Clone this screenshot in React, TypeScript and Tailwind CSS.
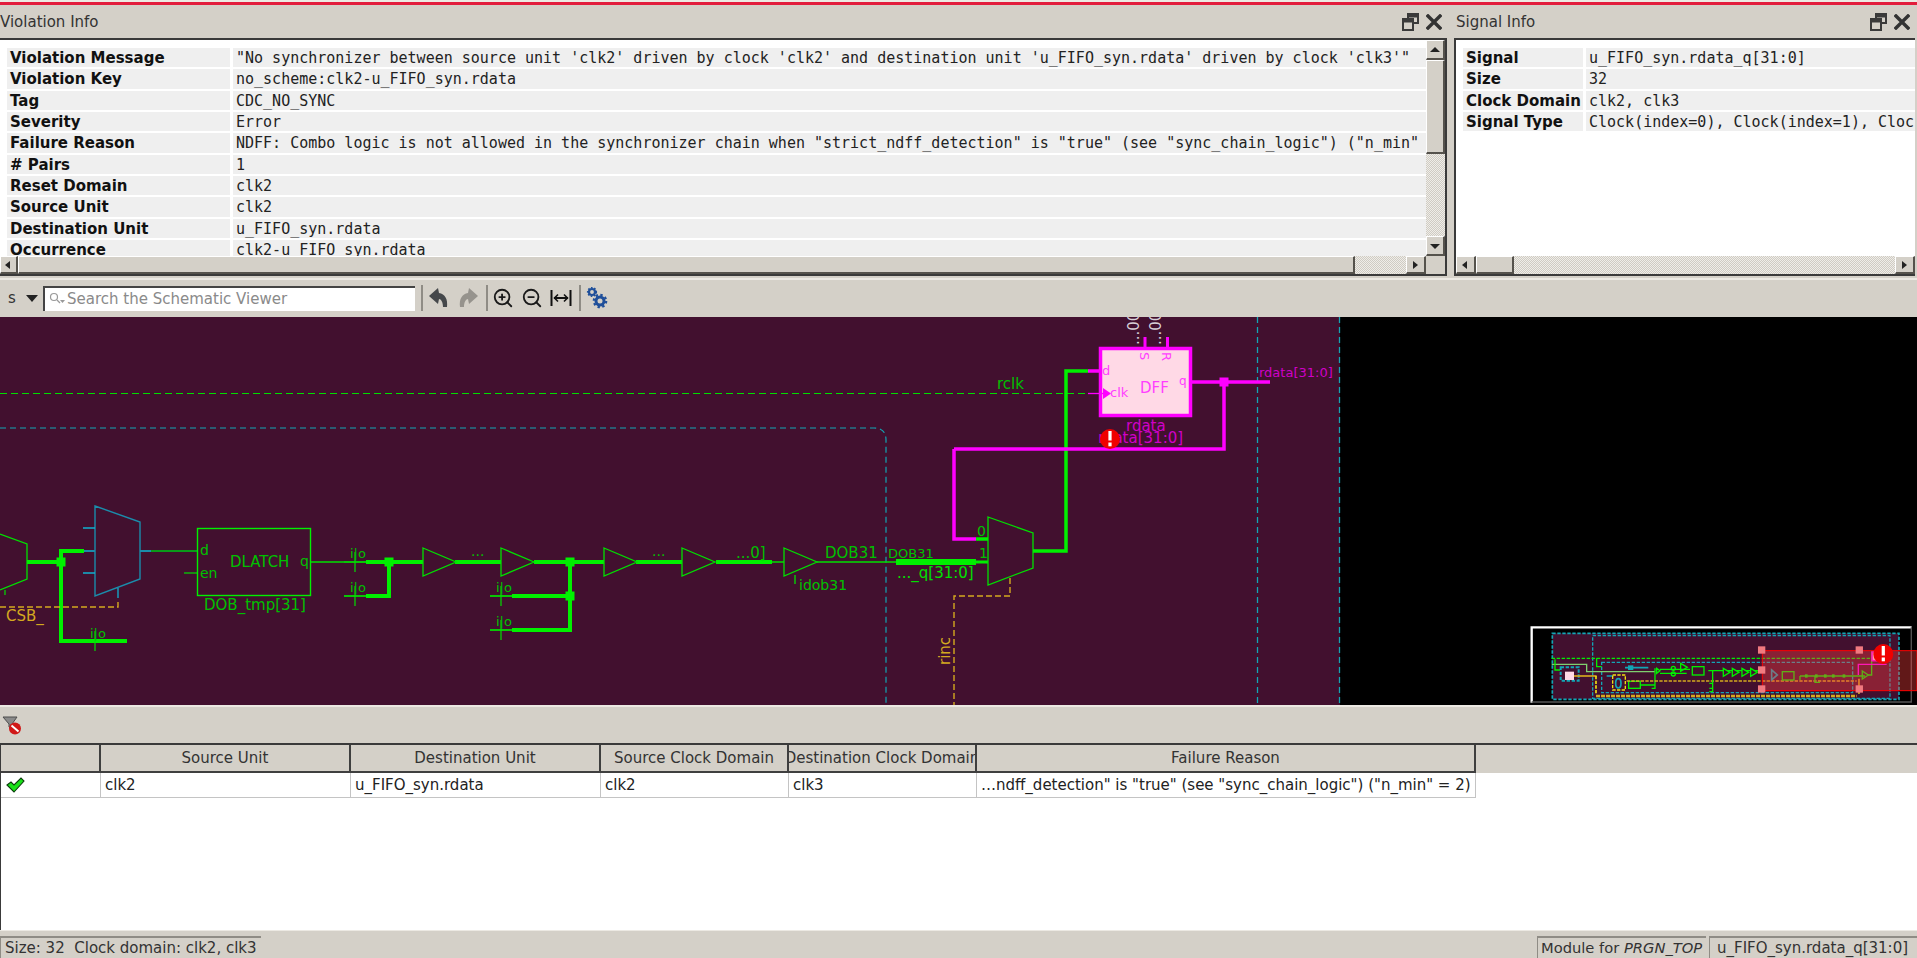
import { ZoomIn, ZoomOut } from "lucide-react";

const violationRows = [
  ["Violation Message", `"No synchronizer between source unit 'clk2' driven by clock 'clk2' and destination unit 'u_FIFO_syn.rdata' driven by clock 'clk3'"`],
  ["Violation Key", "no_scheme:clk2-u_FIFO_syn.rdata"],
  ["Tag", "CDC_NO_SYNC"],
  ["Severity", "Error"],
  ["Failure Reason", `NDFF: Combo logic is not allowed in the synchronizer chain when "strict_ndff_detection" is "true" (see "sync_chain_logic") ("n_min"`],
  ["# Pairs", "1"],
  ["Reset Domain", "clk2"],
  ["Source Unit", "clk2"],
  ["Destination Unit", "u_FIFO_syn.rdata"],
  ["Occurrence", "clk2-u_FIFO_syn.rdata"],
];

const signalRows = [
  ["Signal", "u_FIFO_syn.rdata_q[31:0]"],
  ["Size", "32"],
  ["Clock Domain", "clk2, clk3"],
  ["Signal Type", "Clock(index=0), Clock(index=1), Clock(index=2), Clock(index=3)"],
];

const tableHeaders = ["", "Source Unit", "Destination Unit", "Source Clock Domain", "Destination Clock Domain", "Failure Reason"];

const GREEN = "#00f000";
const THIN = "#00e000";
const LABEL = "#00c000";
const MAGENTA = "#ff00ff";
const CYAN = "#12a5b5";
const YELLOW = "#d4a91f";

function DockButtons({ className }: { className: string }) {
  return (
    <div className={`flex items-center gap-[7px] ${className}`}>
      <svg width="17" height="19" viewBox="0 0 17 19" fill="none" stroke="#3a3a3a" strokeWidth="2">
        <rect x="6" y="2" width="10" height="9" />
        <path d="M6 4h10" strokeWidth="3" />
        <rect x="1" y="7" width="10" height="11" fill="#d4d0c8" />
        <path d="M1 9h10" strokeWidth="3" />
      </svg>
      <svg width="16" height="16" viewBox="0 0 16 16" stroke="#333" strokeWidth="3.4" strokeLinecap="square">
        <path d="M2 2l12 12M14 2L2 14" />
      </svg>
    </div>
  );
}

function ArrowButton({ dir, className }: { dir: "left" | "right" | "up" | "down"; className: string }) {
  const points = {
    left: "7,2 2,6 7,10",
    right: "3,2 8,6 3,10",
    up: "1,8 6,3 11,8",
    down: "1,4 6,9 11,4",
  }[dir];
  return (
    <div className={`flex shrink-0 items-center justify-center border-r-2 border-b-2 border-[#55524c] border-t border-l border-t-white border-l-white bg-[#d4d0c8] ${className}`}>
      <svg width="12" height="12" viewBox="0 0 12 12">
        <polygon points={points} fill="#222" />
      </svg>
    </div>
  );
}

const troughClass = "bg-[repeating-conic-gradient(#cfcbc3_0_25%,#efede8_0_50%)] bg-[length:2px_2px]";
const thumbClass = "border-r-2 border-b-2 border-[#55524c] border-t border-l border-t-white border-l-white bg-[#d4d0c8]";

function InfoTable({ rows, labelWidth }: { rows: string[][]; labelWidth: string }) {
  return (
    <div className="flex flex-col gap-[2px] pt-[8px] pl-[7px]">
      {rows.map(([label, value]) => (
        <div key={label} className="flex h-[19.33px] shrink-0 gap-[3px]">
          <div className={`flex shrink-0 items-center overflow-hidden bg-[#efefef] pt-[1px] pl-[3px] text-[15px] font-bold whitespace-nowrap text-[#111] ${labelWidth}`}>
            {label}
          </div>
          <div className="flex flex-1 items-center overflow-hidden bg-[#efefef] pt-[1px] pl-[3px] font-['DejaVu_Sans_Mono',monospace] text-[15px] whitespace-nowrap text-[#222]">
            {value}
          </div>
        </div>
      ))}
    </div>
  );
}

function Buffer({ x, y = 562 }: { x: number; y?: number }) {
  return <polygon points={`${x},${y - 14} ${x + 33},${y} ${x},${y + 14}`} fill="none" stroke={THIN} strokeWidth="1.3" />;
}

function Junction({ x, y, color = GREEN }: { x: number; y: number; color?: string }) {
  return <rect x={x - 4.5} y={y - 4.5} width="9" height="9" fill={color} />;
}

function IoTick({ x, y }: { x: number; y: number }) {
  return (
    <g>
      <path d={`M${x - 11} ${y}H${x + 11}M${x} ${y - 10}V${y + 10}`} stroke={THIN} strokeWidth="1.2" />
      <text x={x - 5} y={y - 4} fontSize="13" fill={LABEL}>i|o</text>
    </g>
  );
}

function ErrorBadge({ x, y, r }: { x: number; y: number; r: number }) {
  return (
    <g>
      <circle cx={x} cy={y} r={r} fill="#f00000" />
      <rect x={x - r * 0.16} y={y - r * 0.8} width={r * 0.32} height={r * 0.95} fill="#fff" />
      <rect x={x - r * 0.16} y={y + r * 0.35} width={r * 0.32} height={r * 0.38} fill="#fff" />
    </g>
  );
}

function Minimap() {
  const handles = [[725, 90], [1018, 90], [725, 150], [725, 207], [1018, 207]];
  return (
    <g transform="translate(1520 620) scale(0.3333)">
      <rect x="35" y="22" width="1140" height="226" fill="#000" />
      <path d="M35 248V22H1175" fill="none" stroke="#fff" strokeWidth="7" />
      <path d="M35 246H1174V22" fill="none" stroke="#555" strokeWidth="4" />
      <rect x="97" y="40" width="1040" height="198" fill="#42102f" stroke={CYAN} strokeWidth="5" strokeDasharray="10 5" />
      <rect x="218" y="47" width="892" height="188" fill="none" stroke={CYAN} strokeWidth="4" strokeDasharray="10 5" />
      <rect x="245" y="127" width="753" height="91" fill="none" stroke={CYAN} strokeWidth="4" strokeDasharray="10 5" />
      <path d="M95 115H1055" stroke={GREEN} strokeWidth="4" strokeDasharray="10 5" />
      <path d="M95 133H200V155H405" fill="none" stroke="#7fd06f" strokeWidth="4" />
      <path d="M105 118V150H120M230 115V140H245" fill="none" stroke={GREEN} strokeWidth="4" />
      <rect x="122" y="142" width="54" height="40" fill="none" stroke={CYAN} strokeWidth="6" strokeDasharray="10 5" />
      <rect x="135" y="155" width="27" height="25" fill="#ffd9e6" />
      <path d="M162 168H230" stroke={YELLOW} strokeWidth="5" />
      <path d="M228 168V222" stroke="#f0e010" strokeWidth="5" strokeDasharray="10 4" />
      <path d="M315 143H385M260 168H280" stroke={CYAN} strokeWidth="5" />
      <rect x="324" y="136" width="16" height="14" fill={CYAN} />
      <rect x="278" y="165" width="38" height="45" fill="none" stroke="#f0e010" strokeWidth="4" strokeDasharray="10 4" />
      <ellipse cx="295" cy="190" rx="8" ry="14" fill="none" stroke={CYAN} strokeWidth="5" />
      <rect x="326" y="184" width="35" height="21" fill="none" stroke={GREEN} strokeWidth="4" />
      <path d="M360 195H405M405 145V205H395" fill="none" stroke={GREEN} strokeWidth="4" />
      <path d="M320 183H1010" stroke={YELLOW} strokeWidth="5" strokeDasharray="10 4" />
      <path d="M228 228H1010" stroke={YELLOW} strokeWidth="7" strokeDasharray="12 3" />
      <path d="M410 145L420 152L410 160ZM420 148H510M420 160H500" fill="none" stroke={GREEN} strokeWidth="4" />
      <circle cx="460" cy="145" r="6" fill="none" stroke={GREEN} strokeWidth="4" />
      <circle cx="460" cy="162" r="6" fill="none" stroke={GREEN} strokeWidth="4" />
      <path d="M482 130L502 142L482 154Z" fill="none" stroke={GREEN} strokeWidth="4" />
      <rect x="517" y="140" width="35" height="25" fill="none" stroke={GREEN} strokeWidth="4" />
      <path d="M565 152H720M578 152V215H568M578 190H568M578 205H568" fill="none" stroke={GREEN} strokeWidth="4" />
      {[610, 637, 666, 692].map((x) => (
        <path key={x} d={`M${x} 145L${x + 20} 157L${x} 169Z`} fill="#42102f" stroke={GREEN} strokeWidth="4" />
      ))}
      <path d="M755 150L772 165L755 180Z" fill="none" stroke={CYAN} strokeWidth="5" />
      <rect x="787" y="155" width="35" height="25" fill="none" stroke={GREEN} strokeWidth="4" />
      <path d="M840 168H1035M840 168V180M885 168V187H900" fill="none" stroke={GREEN} strokeWidth="4" />
      {[855, 885, 912, 936, 968].map((x) => (
        <rect key={x} x={x} y="163" width="8" height="10" fill={GREEN} />
      ))}
      <path d="M1027 153L1045 165L1027 177Z" fill="none" stroke={GREEN} strokeWidth="4" />
      <path d="M1045 165H1055V95M1055 95H1075" fill="none" stroke={GREEN} strokeWidth="4" />
      <path d="M1015 165V133H1100" fill="none" stroke={MAGENTA} strokeWidth="4" />
      <rect x="1056" y="96" width="34" height="26" fill="#ffd9e6" stroke={MAGENTA} strokeWidth="5" />
      <path d="M1017 176V222" stroke={YELLOW} strokeWidth="5" />
      <rect x="727" y="92" width="464" height="120" fill="#ff4040" fillOpacity="0.38" stroke="#ff0000" strokeWidth="3" />
      {handles.map(([x, y]) => (
        <rect key={`${x}-${y}`} x={x - 11} y={y - 11} width="22" height="22" fill="#f07a80" />
      ))}
      <ErrorBadge x={1090} y={102} r={30} />
    </g>
  );
}

function Schematic() {
  return (
    <svg className="block h-full w-full" viewBox="0 317 1917 388" fontFamily="'DejaVu Sans', sans-serif">
      <rect x="1340" y="317" width="577" height="388" fill="#000" />
      <rect x="0" y="317" width="1340" height="388" fill="#42102f" />

      {/* module boundaries */}
      <path d="M0 428H874Q886 428 886 440V705" fill="none" stroke={CYAN} strokeWidth="1.2" strokeDasharray="6 4" />
      <path d="M1257.5 317V705M1339.5 317V705" stroke={CYAN} strokeWidth="1.3" strokeDasharray="6 4" />
      <path d="M0 393.5H1088" stroke={THIN} strokeWidth="1.2" strokeDasharray="7 4" />
      <text x="997" y="389" fontSize="15" fill={LABEL}>rclk</text>

      {/* left mux */}
      <path d="M0 534L27 544V579L0 590" fill="none" stroke={THIN} strokeWidth="1.3" />
      <path d="M5 590V595" stroke={THIN} strokeWidth="1.2" />
      <path d="M27 562H61M84 551H61V641H127" fill="none" stroke={GREEN} strokeWidth="4" />
      <Junction x={61} y={562} />
      <path d="M95 631V651" stroke={THIN} strokeWidth="1.2" />
      <text x="90" y="638" fontSize="13" fill={LABEL}>i|o</text>
      <path d="M0 607H118V600" fill="none" stroke={YELLOW} strokeWidth="1.4" strokeDasharray="6 3" />
      <text x="6" y="621" fontSize="15" fill={YELLOW}>CSB_</text>

      {/* clock gated mux */}
      <polygon points="95,506 140,522 140,579 95,596" fill="none" stroke="#1b8cab" strokeWidth="1.4" />
      <path d="M83 528H95M83 573H95M118 588V598" stroke="#10b0d0" strokeWidth="1.3" />
      <path d="M84 551H95M140 551H151" stroke="#1b8cab" strokeWidth="2" />
      <path d="M151 551H197" stroke="#0a9a1a" strokeWidth="2" />

      {/* latch */}
      <rect x="197.5" y="528.5" width="113" height="67" fill="none" stroke={GREEN} strokeWidth="1.4" />
      <path d="M184 573H197" stroke={THIN} strokeWidth="1.2" />
      <text x="200" y="555" fontSize="14" fill={LABEL}>d</text>
      <text x="200" y="578" fontSize="14" fill={LABEL}>en</text>
      <text x="230" y="567" fontSize="15" fill={LABEL}>DLATCH</text>
      <text x="300" y="566" fontSize="14" fill={LABEL}>q</text>
      <text x="204" y="610" fontSize="15" fill={LABEL}>DOB_tmp[31]</text>

      {/* buffer chain */}
      <path d="M311 562H366" stroke={THIN} strokeWidth="1.3" />
      <path d="M344 596H366M490 596H512M490 630H512" stroke={THIN} strokeWidth="1.3" />
      <IoTick x={355} y={562} />
      <IoTick x={355} y={596} />
      <IoTick x={501} y={596} />
      <IoTick x={501} y={630} />
      <path d="M366 562H423M389 562V596H366M455 562H501M534 562H604M570 562V630H512M570 596H512M636 562H682M716 562H772" fill="none" stroke={GREEN} strokeWidth="4" />
      <Junction x={389} y={562} />
      <Junction x={570} y={562} />
      <Junction x={570} y={596} />
      <Buffer x={423} />
      <Buffer x={501} />
      <Buffer x={604} />
      <Buffer x={682} />
      <Buffer x={784} />
      <text x="471" y="556" fontSize="14" fill={LABEL}>...</text>
      <text x="652" y="556" fontSize="14" fill={LABEL}>...</text>
      <text x="736" y="558" fontSize="15" fill={LABEL}>...0]</text>
      <path d="M772 562H784M817 562H896M795 575V584" stroke={THIN} strokeWidth="1.3" />
      <text x="799" y="590" fontSize="14" fill={LABEL}>idob31</text>
      <text x="825" y="558" fontSize="15" fill={LABEL}>DOB31</text>
      <text x="888" y="558" fontSize="13" fill={LABEL}>DOB31</text>
      <path d="M896 562H976" stroke={GREEN} strokeWidth="6" />
      <path d="M976 562H988" stroke={GREEN} strokeWidth="3" />
      <text x="897" y="578" fontSize="15" fontWeight="500" fill="#00e000">..._q[31:0]</text>

      {/* output mux */}
      <polygon points="988,517 1033,533 1033,568 988,585" fill="none" stroke={THIN} strokeWidth="1.3" />
      <text x="977" y="536" fontSize="14" fill={LABEL}>0</text>
      <text x="979" y="558" fontSize="14" fill={LABEL}>1</text>
      <path d="M1010 578V596H954V705" fill="none" stroke={YELLOW} strokeWidth="1.4" strokeDasharray="6 3" />
      <text transform="translate(950 665) rotate(-90)" fontSize="15" fill={YELLOW}>rinc</text>
      <path d="M954 449V539H976" fill="none" stroke={MAGENTA} strokeWidth="3.5" />
      <path d="M976 539H988" stroke={GREEN} strokeWidth="3.5" />
      <path d="M1033 551H1066V371H1088" fill="none" stroke={GREEN} strokeWidth="3.5" />

      {/* flop */}
      <text transform="translate(1139 345) rotate(-90)" fontSize="15" fill="#d8d0d8">...00</text>
      <text transform="translate(1161 345) rotate(-90)" fontSize="15" fill="#d8d0d8">...00</text>
      <path d="M1145 337V347M1167.5 337V347" stroke={MAGENTA} strokeWidth="3" />
      <rect x="1100.5" y="348.5" width="90" height="67" fill="#ffd9e6" stroke={MAGENTA} strokeWidth="3.5" />
      <path d="M1088 371H1100" stroke={MAGENTA} strokeWidth="3.5" />
      <path d="M1088 393.5H1103" stroke={MAGENTA} strokeWidth="1.3" />
      <polygon points="1103,388 1111,393.5 1103,399" fill={MAGENTA} />
      <text transform="translate(1140 352) rotate(90)" fontSize="13" fill="#ff40ff">S</text>
      <text transform="translate(1162 352) rotate(90)" fontSize="13" fill="#ff40ff">R</text>
      <text x="1102" y="375" fontSize="13" fill="#ff40ff">d</text>
      <text x="1110" y="397" fontSize="13" fill="#ff40ff">clk</text>
      <text x="1140" y="393" fontSize="15" fill="#ff40ff">DFF</text>
      <text x="1179" y="385" fontSize="12" fill="#ff40ff">q</text>
      <path d="M1192 382H1270M1224 382V449H954" fill="none" stroke={MAGENTA} strokeWidth="3.5" />
      <Junction x={1224} y={382} color={MAGENTA} />
      <text x="1259" y="377" fontSize="13" fill="#d000c8">rdata[31:0]</text>
      <text x="1126" y="431" fontSize="15" fill="#d000c8">rdata</text>
      <text x="1098" y="443" fontSize="15" fill="#d000c8">rdata[31:0]</text>
      <ErrorBadge x={1110} y={439} r={10} />

      <Minimap />
    </svg>
  );
}

function Toolbar() {
  return (
    <div className="flex h-[39px] shrink-0 items-center border-t-2 border-[#ece9e3] bg-[#d4d0c8] pb-[1px] text-[15px] text-[#333]">
      <span className="ml-[8px] w-[17px]">s</span>
      <svg width="14" height="9" viewBox="0 0 14 9">
        <polygon points="1,1 13,1 7,8" fill="#222" />
      </svg>
      <div className="ml-[4px] flex h-[25px] w-[372px] items-center border-t-2 border-l-2 border-[#444] bg-white pl-[4px]">
        <svg width="17" height="14" viewBox="0 0 17 14" fill="none" stroke="#999" strokeWidth="1.2">
          <circle cx="5" cy="5" r="3.5" />
          <path d="M8 8l3 3" />
          <polygon points="11,8 16,8 13.5,11" fill="#999" stroke="none" />
        </svg>
        <span className="ml-[1px] text-[#8a8a8a]">Search the Schematic Viewer</span>
      </div>
      <div className="ml-[6px] h-[26px] w-[2px] bg-[#8f8c85]" />
      <svg className="ml-[6px]" width="20" height="20" viewBox="0 0 20 20">
        <path d="M0 8L9 0L10 5C16 6 19 11 18 19L14 19C14 14 12 11 10 11L9 16Z" fill="#45484b" />
      </svg>
      <svg className="ml-[9px]" width="20" height="20" viewBox="0 0 20 20">
        <path d="M20 8L11 0L10 5C4 6 1 11 2 19L6 19C6 14 8 11 10 11L11 16Z" fill="#96938d" />
      </svg>
      <div className="ml-[8px] h-[26px] w-[2px] bg-[#8f8c85]" />
      <ZoomIn className="ml-[4px] h-[22px] w-[22px] text-[#1a1a1a]" strokeWidth={2} />
      <ZoomOut className="ml-[7px] h-[22px] w-[22px] text-[#1a1a1a]" strokeWidth={2} />
      <svg className="ml-[7px]" width="22" height="16" viewBox="0 0 22 16" stroke="#111" fill="none" strokeWidth="2">
        <path d="M1.5 0V16M20.5 0V16M4 8H18" />
        <path d="M8 4.5L4.5 8L8 11.5M14 4.5L17.5 8L14 11.5" strokeWidth="1.6" />
      </svg>
      <div className="ml-[7px] h-[26px] w-[2px] bg-[#8f8c85]" />
      <svg className="ml-[5px]" width="22" height="22" viewBox="0 0 22 22" fill="none" stroke="#1f4f9a">
        <circle cx="6" cy="5" r="3" strokeWidth="2.2" />
        <circle cx="6" cy="5" r="4.4" strokeWidth="1.4" strokeDasharray="1.6 1.6" />
        <circle cx="14" cy="14" r="4" strokeWidth="3" />
        <circle cx="14" cy="14" r="6.2" strokeWidth="2.2" strokeDasharray="2.4 2.4" />
      </svg>
    </div>
  );
}

function ViolationPanel() {
  return (
    <div className="flex w-[1450px] shrink-0 flex-col">
      <div className="flex h-[33px] shrink-0 items-center justify-between">
        <span className="pt-[2px] text-[15px] text-[#333]">Violation Info</span>
        <DockButtons className="pr-[8px]" />
      </div>
      <div className="flex h-[238px] w-[1447px] flex-col border-t-2 border-r-2 border-b-2 border-[#3a3a3a] bg-white">
        <div className="flex h-[216px] min-h-0">
          <div className="min-w-0 flex-1 overflow-hidden">
            <InfoTable rows={violationRows} labelWidth="w-[223px]" />
          </div>
          <div className="flex w-[19px] shrink-0 flex-col">
            <ArrowButton dir="up" className="h-[20px] w-full" />
            <div className={`h-[94px] ${thumbClass}`} />
            <div className={`flex-1 ${troughClass}`} />
            <ArrowButton dir="down" className="h-[20px] w-full" />
          </div>
        </div>
        <div className="flex h-[18px] shrink-0 bg-[#d4d0c8]">
          <ArrowButton dir="left" className="h-full w-[18px]" />
          <div className={`w-[1337px] ${thumbClass}`} />
          <div className={`flex-1 ${troughClass}`} />
          <ArrowButton dir="right" className="h-full w-[20px]" />
          <div className="w-[19px] shrink-0" />
        </div>
      </div>
    </div>
  );
}

function SignalPanel() {
  return (
    <div className="ml-[4px] flex min-w-0 flex-1 flex-col pr-[2px]">
      <div className="flex h-[33px] shrink-0 items-center justify-between">
        <span className="pt-[2px] pl-[2px] text-[15px] text-[#333]">Signal Info</span>
        <DockButtons className="pr-[5px]" />
      </div>
      <div className="flex h-[238px] flex-col border-t-2 border-b-2 border-l-2 border-[#3a3a3a] bg-white">
        <div className="h-[216px] overflow-hidden">
          <InfoTable rows={signalRows} labelWidth="w-[120px]" />
        </div>
        <div className="flex h-[18px] shrink-0">
          <ArrowButton dir="left" className="h-full w-[20px]" />
          <div className={`w-[38px] ${thumbClass}`} />
          <div className={`flex-1 ${troughClass}`} />
          <ArrowButton dir="right" className="h-full w-[20px]" />
        </div>
      </div>
    </div>
  );
}

function ResultsTable() {
  return (
    <div className="flex h-[187px] shrink-0 flex-col border-t-2 border-l border-[#3a3a3a] bg-white">
      <div className="grid h-[28px] shrink-0 grid-cols-[100px_250px_250px_188px_188px_499px] bg-[#d4d0c8]">
        {tableHeaders.map((header, index) => (
          <div key={index} className="flex items-center justify-center overflow-hidden border-r-2 border-b-2 border-[#3f3f3f] pt-[1px] text-[15px] whitespace-nowrap text-[#333]">
            {header}
          </div>
        ))}
      </div>
      <div className="grid h-[25px] shrink-0 grid-cols-[100px_250px_250px_188px_188px_499px] text-[15px] text-[#222]">
        <div className="flex items-center border-r border-b border-[#c4c4c4] pl-[5px]">
          <svg width="19" height="16" viewBox="0 0 19 16">
            <path d="M1 8L5 5L8 8L15 1L18 4L8 15Z" fill="#18e018" stroke="#0b3d0b" strokeWidth="1.1" />
          </svg>
        </div>
        <div className="flex items-center border-r border-b border-[#c4c4c4] pl-[4px]">clk2</div>
        <div className="flex items-center border-r border-b border-[#c4c4c4] pl-[4px]">u_FIFO_syn.rdata</div>
        <div className="flex items-center border-r border-b border-[#c4c4c4] pl-[4px]">clk2</div>
        <div className="flex items-center border-r border-b border-[#c4c4c4] pl-[4px]">clk3</div>
        <div className="flex items-center overflow-hidden border-r border-b border-[#c4c4c4] pl-[4px] whitespace-nowrap">
          …ndff_detection" is "true" (see "sync_chain_logic") ("n_min" = 2)
        </div>
      </div>
    </div>
  );
}

export default function App() {
  return (
    <div className="flex h-[958px] w-[1917px] flex-col overflow-hidden bg-[#d4d0c8] font-['DejaVu_Sans',sans-serif]">
      <div className="h-[2px] shrink-0 bg-[#ece9e3]" />
      <div className="h-[3px] shrink-0 bg-[#e21d3c]" />
      <div className="flex h-[273px] shrink-0">
        <ViolationPanel />
        <SignalPanel />
      </div>
      <Toolbar />
      <div className="h-[388px] shrink-0">
        <Schematic />
      </div>
      <div className="flex h-[38px] shrink-0 items-center border-t-2 border-[#ece9e3] pl-[2px]">
        <svg width="20" height="19" viewBox="0 0 20 19">
          <path d="M1 1H15L10 8V13L7 11V8Z" fill="#8a8a8a" stroke="#4d4d4d" strokeWidth="1" />
          <circle cx="13" cy="12.5" r="6" fill="#d01818" />
          <path d="M9.5 9.5L16.5 15.5" stroke="#fff" strokeWidth="2" />
        </svg>
      </div>
      <ResultsTable />
      <div className="h-[6px] shrink-0 border-t border-[#ece9e3]" />
      <div className="flex h-[22px] shrink-0 justify-between text-[15px] text-[#333]">
        <div className="flex w-[261px] items-center border-t-2 border-l border-[#8f8c85] pl-[4px] whitespace-pre">
          Size: 32  Clock domain: clk2, clk3
        </div>
        <div className="flex">
          <div className="flex w-[169px] items-center border-t-2 border-l border-[#8f8c85] pl-[3px] text-[14.7px] whitespace-nowrap">
            Module for&nbsp;<em>PRGN_TOP</em>
          </div>
          <div className="ml-[3px] flex w-[208px] items-center border-t-2 border-l border-[#8f8c85] pl-[7px] whitespace-nowrap">
            u_FIFO_syn.rdata_q[31:0]
          </div>
        </div>
      </div>
    </div>
  );
}
